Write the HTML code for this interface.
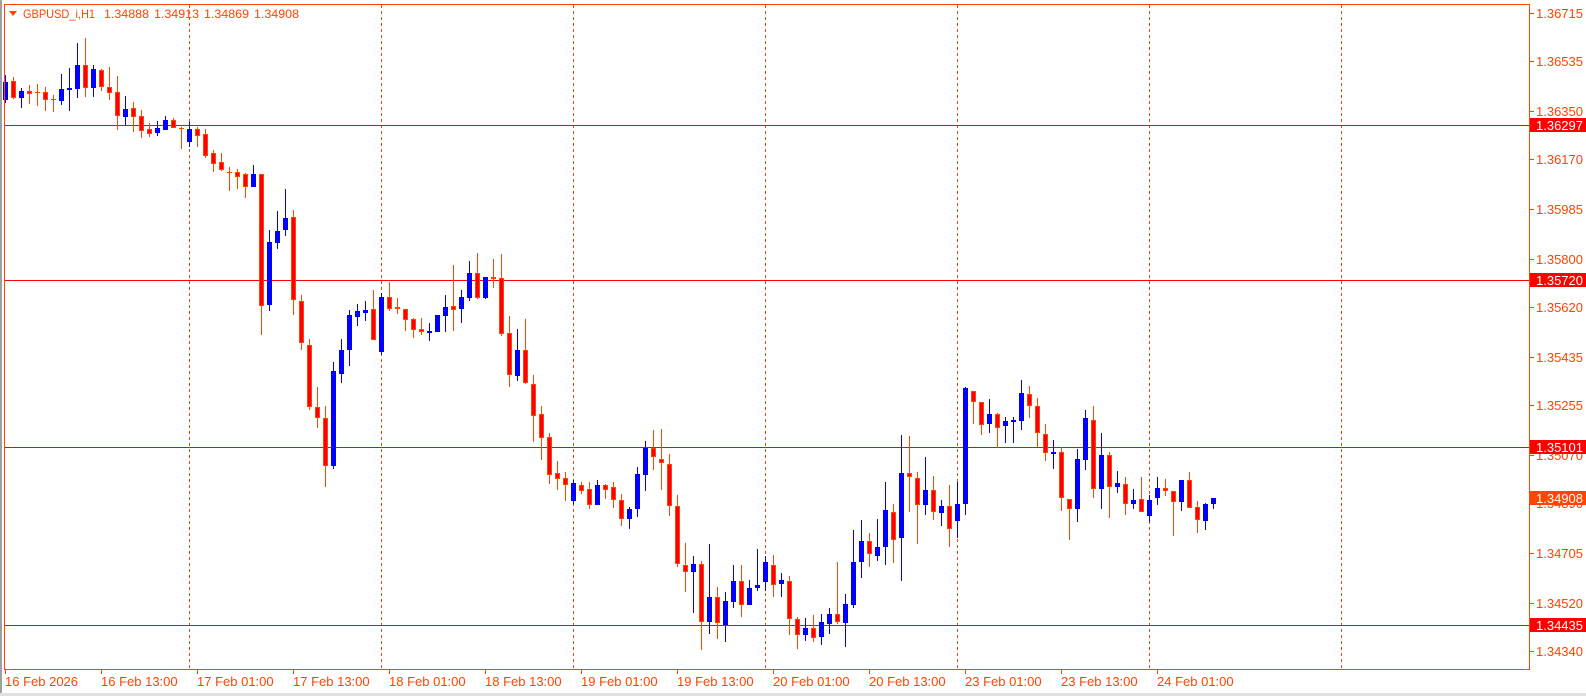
<!DOCTYPE html>
<html><head><meta charset="utf-8">
<style>
html,body{margin:0;padding:0;background:#fff;}
body{width:1586px;height:696px;overflow:hidden;position:relative;font-family:"Liberation Sans",sans-serif;}
svg{position:absolute;left:0;top:0;}
</style></head>
<body>
<svg id="s" width="1586" height="696" xmlns="http://www.w3.org/2000/svg" font-family="Liberation Sans, sans-serif">
<rect x="0" y="0" width="2" height="696" fill="#a0a0a0"/>
<rect x="0" y="693" width="1586" height="3" fill="#e0e0e0"/>
<g id="grid"></g>
<g id="lv"></g>
<g id="c"></g>
<rect x="4.5" y="4.5" width="1525" height="665" fill="none" stroke="#ff4500" stroke-width="1"/>
<g id="ax"></g>
<polygon points="9,11 17,11 13,16" fill="#ff4500"/>
<text x="23" y="18" font-size="12" fill="#ff4500" textLength="72" lengthAdjust="spacingAndGlyphs">GBPUSD_i,H1</text>
<text x="104" y="18" font-size="12" fill="#ff4500" textLength="45" lengthAdjust="spacingAndGlyphs">1.34888</text>
<text x="154" y="18" font-size="12" fill="#ff4500" textLength="45" lengthAdjust="spacingAndGlyphs">1.34913</text>
<text x="204" y="18" font-size="12" fill="#ff4500" textLength="45" lengthAdjust="spacingAndGlyphs">1.34869</text>
<text x="254" y="18" font-size="12" fill="#ff4500" textLength="45" lengthAdjust="spacingAndGlyphs">1.34908</text>
</svg>
<script>
var NS="http://www.w3.org/2000/svg";
function el(p,t,a,txt){var e=document.createElementNS(NS,t);for(var k in a)e.setAttribute(k,a[k]);if(txt)e.textContent=txt;document.getElementById(p).appendChild(e);return e;}
function Y(p){return 13+(1.36715-p)*26863;}
for(var k=0;k<7;k++){var x=189.5+192*k;el("grid","line",{x1:x,y1:5,x2:x,y2:669,stroke:"#ff4500","stroke-width":1,"stroke-dasharray":"3,3"});}
[1.36297,1.35720,1.35101,1.34435].forEach(function(p){var y=Math.round(Y(p))+0.5;el("lv","line",{x1:5,y1:y,x2:1529,y2:y,stroke:"#ff0000","stroke-width":1});});
["1.36715","1.36535","1.36350","1.36170","1.35985","1.35800","1.35620","1.35435","1.35255","1.35070","1.34890","1.34705","1.34520","1.34340"].forEach(function(s){var y=Math.round(Y(parseFloat(s)));el("ax","line",{x1:1530,y1:y+0.5,x2:1534,y2:y+0.5,stroke:"#ff4500"});el("ax","text",{x:1536,y:y+5,"font-size":13,fill:"#ff4500"},s);});
[["1.36297","#ff0000"],["1.35720","#ff0000"],["1.35101","#ff0000"],["1.34435","#ff0000"],["1.34908","#ff4500"]].forEach(function(a){var y=Math.round(Y(parseFloat(a[0])));el("ax","rect",{x:1530,y:y-7,width:56,height:14,fill:a[1]});el("ax","text",{x:1536,y:y+5,"font-size":13,fill:"#fff"},a[0]);});
var tl=["16 Feb 2026","16 Feb 13:00","17 Feb 01:00","17 Feb 13:00","18 Feb 01:00","18 Feb 13:00","19 Feb 01:00","19 Feb 13:00","20 Feb 01:00","20 Feb 13:00","23 Feb 01:00","23 Feb 13:00","24 Feb 01:00"];
tl.forEach(function(s,i){var x=5+96*i;el("ax","line",{x1:x+0.5,y1:670,x2:x+0.5,y2:674,stroke:"#ff4500"});el("ax","text",{x:x,y:686,"font-size":13,fill:"#ff4500"},s);});
var D=[
[1,82,100,75,103],[0,81,98,77,99],[1,91,98,88,108],[0,91,94,85,104],[0,92,92,84,106],[0,92,100,87,111],[0,99,99,95,112],[1,89,101,74,105],[1,88,89,68,111],[1,65,89,43,98],
[0,65,88,38,97],[1,69,88,65,97],[0,70,87,69,91],[0,87,93,67,100],[0,92,116,76,130],[1,109,117,96,126],[0,108,117,102,132],[0,116,131,110,138],[0,129,134,123,137],[1,128,133,121,136],
[1,120,130,116,130],[0,120,128,118,128],[0,128,128,127,149],[1,129,142,122,147],[0,129,136,127,147],[0,134,156,129,158],[0,153,164,150,172],[0,162,170,153,171],[0,172,172,167,191],[0,172,177,169,189],
[0,174,187,173,198],[1,174,187,165,187],[0,174,306,174,335],[1,242,305,230,311],[1,231,243,211,249],[1,218,230,189,236],[0,217,300,210,315],[0,301,343,295,350],[0,345,407,339,410],[0,407,418,387,428],
[0,418,466,406,487],[1,371,466,362,469],[1,350,374,339,383],[1,315,350,310,366],[1,311,317,304,326],[1,310,313,301,321],[0,309,340,290,340],[1,297,352,293,355],[0,297,309,282,311],[0,307,309,298,314],
[0,309,320,309,331],[0,319,330,318,338],[0,329,332,318,335],[1,331,332,323,341],[1,315,332,315,332],[1,307,316,295,332],[0,306,310,265,331],[1,297,309,290,323],[1,273,298,261,301],[0,273,298,253,299],
[1,277,298,277,299],[0,277,279,259,288],[0,278,334,254,336],[0,333,375,316,387],[1,350,376,329,381],[0,350,383,319,384],[0,384,416,375,442],[0,414,438,406,460],[0,437,475,433,484],[0,473,479,461,490],
[0,478,485,472,501],[1,483,501,480,504],[0,485,491,482,494],[0,489,505,482,509],[1,485,505,480,505],[0,485,490,484,499],[0,487,500,482,508],[0,500,519,494,526],[1,509,519,507,529],[1,474,509,467,517],
[1,448,475,441,491],[0,448,457,430,470],[0,459,463,429,490],[0,464,506,454,516],[0,506,564,495,567],[0,565,572,543,592],[1,564,572,556,613],[0,564,622,561,650],[1,597,622,544,634],[0,597,623,587,639],
[1,601,625,592,642],[1,581,602,565,608],[0,581,605,565,617],[1,588,605,580,605],[1,585,588,549,591],[1,562,582,556,591],[0,565,585,555,597],[1,580,584,573,597],[0,581,619,576,635],[0,619,635,617,649],
[1,628,635,618,641],[0,628,638,615,642],[1,622,637,614,645],[1,614,624,608,634],[0,614,622,562,624],[1,604,623,594,647],[1,562,605,530,608],[1,541,562,520,578],[0,541,554,533,567],[1,547,556,519,561],
[1,510,547,482,565],[0,512,540,504,563],[1,473,538,435,581],[0,473,477,436,512],[0,478,505,472,544],[1,490,505,457,515],[0,490,512,476,520],[1,506,513,500,526],[0,506,529,485,547],[1,504,521,482,538],
[1,388,504,387,515],[0,391,402,391,424],[0,402,425,402,435],[1,414,424,399,433],[0,414,428,413,448],[1,421,426,417,443],[1,420,422,417,443],[1,393,421,380,430],[0,394,406,386,418],[0,406,433,398,447],
[0,434,453,424,461],[1,452,453,440,469],[0,452,498,447,511],[0,499,509,499,540],[1,459,509,449,522],[1,418,460,410,470],[0,420,489,406,498],[1,455,489,433,509],[0,455,487,452,518],[1,483,487,471,493],
[0,484,504,477,515],[1,500,504,489,509],[0,499,512,477,512],[1,500,516,495,522],[1,488,498,477,505],[0,488,491,479,496],[0,491,502,491,536],[1,480,502,480,511],[0,480,508,472,508],[0,507,520,501,533],
[1,504,521,503,530],[1,498,504,498,509]
];
D.forEach(function(d,i){
 var cx=5+8*i, bull=d[0]==1, wc=bull?"#0000ff":"#ff4500";
 el("c","rect",{x:cx,y:d[3],width:1,height:Math.max(1,d[4]-d[3]),fill:wc});
 var h=d[2]-d[1];
 if(h<=1){el("c","rect",{x:cx-2,y:d[1],width:5,height:1+(h>0?1:0),fill:wc});}
 else if(bull){el("c","rect",{x:cx-2,y:d[1],width:5,height:h,fill:"#0000ff"});}
 else{el("c","rect",{x:cx-1.5,y:d[1]+0.5,width:4,height:h-1,fill:"#ff0000",stroke:"#ff4500","stroke-width":1});}
});
</script>
</body></html>
